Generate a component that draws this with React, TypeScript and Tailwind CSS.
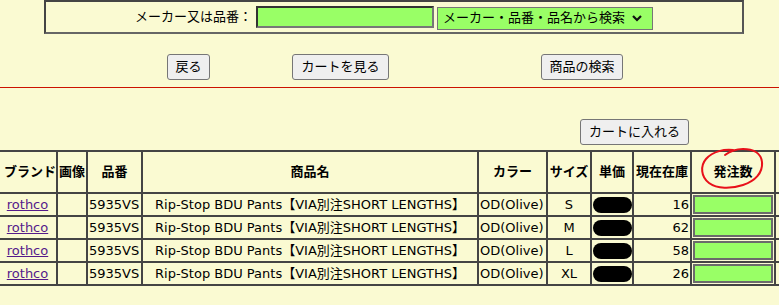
import React from 'react';

const rows = [
  { size: 'S', stock: 16 },
  { size: 'M', stock: 62 },
  { size: 'L', stock: 58 },
  { size: 'XL', stock: 26 },
];

const cell = 'border-2 border-[#444] p-0';

export default function App() {
  return (
    <div
      className="relative w-full h-[305px] overflow-hidden bg-[#fafad2] text-[13px] text-black"
      style={{ fontFamily: '"DejaVu Sans", "Noto Sans CJK JP", sans-serif' }}
    >
      {/* search box */}
      <div className="ml-[44px] w-[700px] h-[34px] border-2 border-[#444] border-b-[#666] border-r-[#555] flex items-center justify-center">
        <span className="mr-[4px]">メーカー又は品番：</span>
        <div className="w-[178px] h-[22px] bg-[#99ff66] border-2 border-t-[#333] border-l-[#333] border-r-[#777] border-b-[#777]" />
        <div className="ml-[3px] mt-[2px] w-[216px] h-[23px] bg-[#99ff66] border border-[#767676] flex items-center pl-[5px]">
          <span>メーカー・品番・品名から検索</span>
          <svg width="12" height="10" viewBox="0 0 12 10" className="ml-[6px]">
            <path d="M2 3 L6 7 L10 3" fill="none" stroke="#111" strokeWidth="2.2" />
          </svg>
        </div>
      </div>

      {/* nav buttons */}
      <div className="flex mt-[20px] h-[26px]">
        <button className="ml-[167px] w-[43px] h-[26px] bg-[#efefef] border border-[#767676] rounded-[3px]">戻る</button>
        <button className="ml-[82px] w-[97px] h-[26px] bg-[#efefef] border border-[#767676] rounded-[3px]">カートを見る</button>
        <button className="ml-[152px] w-[82px] h-[26px] bg-[#efefef] border border-[#767676] rounded-[3px]">商品の検索</button>
      </div>

      <div className="mt-[7px] h-px bg-[#cc1100]" />

      <button className="block mt-[31px] ml-[580px] w-[109px] h-[26px] bg-[#efefef] border border-[#767676] rounded-[3px]">
        カートに入れる
      </button>

      {/* product table */}
      <table className="mt-[5px] ml-[-3px] table-fixed border-collapse w-[842px]">
        <colgroup>
          <col className="w-[59px]" />
          <col className="w-[30px]" />
          <col className="w-[55px]" />
          <col className="w-[336px]" />
          <col className="w-[69px]" />
          <col className="w-[44px]" />
          <col className="w-[42px]" />
          <col className="w-[58px]" />
          <col className="w-[84px]" />
          <col className="w-[65px]" />
        </colgroup>
        <thead>
          <tr className="h-[42px] font-bold">
            <th className={`${cell} text-right`}>ブランド</th>
            <th className={cell}>画像</th>
            <th className={cell}>品番</th>
            <th className={cell}>商品名</th>
            <th className={cell}>カラー</th>
            <th className={cell}>サイズ</th>
            <th className={cell}>単価</th>
            <th className={cell}>現在在庫</th>
            <th className={cell}>発注数</th>
            <th className={cell}></th>
          </tr>
        </thead>
        <tbody>
          {rows.map((r) => (
            <tr key={r.size} className="h-[23px]">
              <td className={`${cell} text-center`}>
                <a href="#" className="underline text-[#551a8b]">rothco</a>
              </td>
              <td className={cell}></td>
              <td className={`${cell} pl-[1px]`}>5935VS</td>
              <td className={`${cell} text-center`}>Rip-Stop BDU Pants【VIA別注SHORT LENGTHS】</td>
              <td className={`${cell} pl-[1px]`}>OD(Olive)</td>
              <td className={`${cell} text-center`}>{r.size}</td>
              <td className={cell}>
                <div className="ml-[1px] w-[39px] h-[16px] bg-black rounded-[8px]" />
              </td>
              <td className={`${cell} text-right pr-[1px]`}>{r.stock}</td>
              <td className={cell}>
                <div className="mx-auto w-[80px] h-[19px] bg-[#99ff66] border-2 border-[#6b6b6b]" />
              </td>
              <td className={cell}></td>
            </tr>
          ))}
        </tbody>
      </table>

      {/* red hand-drawn circle annotation */}
      <svg className="absolute left-[695px] top-[145px]" width="75" height="48" viewBox="0 0 75 48">
        <path
          d="M38 5 C30 4 18 6 11 14 C5 21 6 32 14 38 C22 44 36 44 48 40 C60 36 68 28 67 17 C66 8 58 4 48 4 C40 4 34 7 30 10"
          fill="none"
          stroke="#e8101a"
          strokeWidth="2"
          strokeLinecap="round"
        />
      </svg>
    </div>
  );
}
